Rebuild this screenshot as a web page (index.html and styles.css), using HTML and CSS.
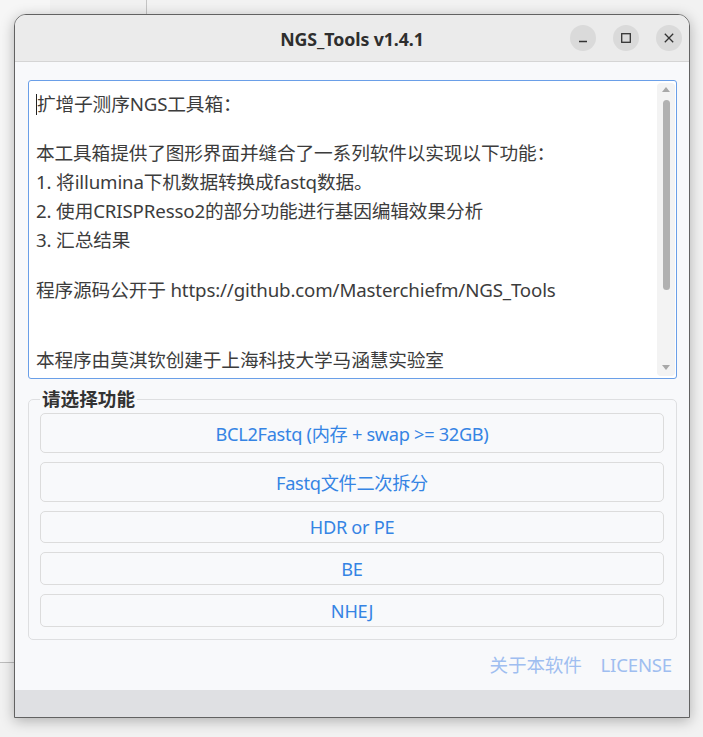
FILE: index.html
```html
<!DOCTYPE html>
<html lang="zh-CN">
<head>
<meta charset="utf-8">
<title>NGS_Tools v1.4.1</title>
<link rel="stylesheet" href="styles.css">
</head>
<body>
<div class="desktop">
  <div class="bg-window bg-top"></div>
  <div class="bg-window bg-left"></div>
  <div class="window">
    <header class="titlebar">
      <div class="title">NGS_Tools v1.4.1</div>
      <div class="controls">
        <span class="ctl"><svg width="12" height="12" viewBox="0 0 12 12"><path d="M2 9.5h8" stroke="#333" stroke-width="1.4" fill="none"/></svg></span>
        <span class="ctl"><svg width="12" height="12" viewBox="0 0 12 12"><rect x="1.7" y="1.7" width="8.6" height="8.6" stroke="#333" stroke-width="1.3" fill="none"/></svg></span>
        <span class="ctl"><svg width="12" height="12" viewBox="0 0 12 12"><path d="M1.8 1.8l8.4 8.4M10.2 1.8l-8.4 8.4" stroke="#333" stroke-width="1.3" fill="none"/></svg></span>
      </div>
    </header>
    <main class="content">
      <div class="textbox">
        <div class="text">
          <p class="line"><span class="caret"></span>扩增子测序NGS工具箱：</p>
          <p class="blank"></p>
          <p class="line">本工具箱提供了图形界面并缝合了一系列软件以实现以下功能：</p>
          <p class="line">1. 将illumina下机数据转换成fastq数据。</p>
          <p class="line">2. 使用CRISPResso2的部分功能进行基因编辑效果分析</p>
          <p class="line">3. 汇总结果</p>
          <p class="blank"></p>
          <p class="line">程序源码公开于 https://github.com/Masterchiefm/NGS_Tools</p>
          <p class="blank"></p>
          <p class="blank"></p>
          <p class="line">本程序由莫淇钦创建于上海科技大学马涵慧实验室</p>
        </div>
        <div class="scrollbar">
          <span class="arrow up"></span>
          <span class="thumb"></span>
          <span class="spacer"></span>
          <span class="arrow down"></span>
        </div>
      </div>
      <fieldset class="group">
        <legend class="group-title">请选择功能</legend>
        <div class="buttons">
          <button class="btn h40">BCL2Fastq (内存 + swap &gt;= 32GB)</button>
          <button class="btn h40">Fastq文件二次拆分</button>
          <button class="btn h32">HDR or PE</button>
          <button class="btn h33">BE</button>
          <button class="btn h33">NHEJ</button>
        </div>
      </fieldset>
      <div class="links">
        <span class="link">关于本软件</span>
        <span class="link">LICENSE</span>
      </div>
    </main>
    <footer class="statusbar"></footer>
  </div>
</div>
</body>
</html>
```
FILE: styles.css
```css
* { box-sizing: border-box; }
html, body { margin: 0; padding: 0; }
body {
  background: #f2f2f2;
  font-family: "Noto Sans", "Noto Sans CJK SC", sans-serif;
  width: 703px;
  height: 737px;
  overflow: hidden;
}
.desktop {
  position: relative;
  width: 703px;
  height: 737px;
}
.bg-window {
  position: absolute;
}
.bg-top {
  left: 44px;
  top: -10px;
  width: 103px;
  height: 50px;
  background: #f1f1f1;
  border-left: 1px solid #c4c4c4;
  border-right: 1px solid #c4c4c4;
}
.bg-left {
  left: -10px;
  top: -10px;
  width: 60px;
  height: 673px;
  background: #f6f6f6;
  border-bottom: 1px solid #bdbdbd;
}
.window {
  position: absolute;
  left: 14px;
  top: 14px;
  width: 676px;
  height: 704px;
  border: 1px solid #626262;
  border-radius: 12px 12px 0 0;
  background: #f8f9fb;
  box-shadow: 0 3px 14px rgba(0, 0, 0, 0.28);
  display: flex;
  flex-direction: column;
  overflow: hidden;
}
.titlebar {
  height: 47px;
  flex: none;
  background: #ebebeb;
  border-bottom: 1px solid #d5d5d5;
  display: grid;
  grid-template-columns: 1fr auto 1fr;
  align-items: center;
}
.title {
  grid-column: 2;
  font-weight: 700;
  font-size: 17.8px;
  letter-spacing: -0.1px;
  color: #2e2e2e;
  padding-top: 1px;
}
.controls {
  grid-column: 3;
  justify-self: end;
  display: flex;
  gap: 17px;
  padding-right: 7px;
}
.ctl {
  width: 26px;
  height: 26px;
  border-radius: 50%;
  background: #dadada;
  display: flex;
  align-items: center;
  justify-content: center;
}
.content {
  flex: 1;
  padding: 18px 12px 0 13px;
  display: flex;
  flex-direction: column;
}
.textbox {
  height: 299px;
  flex: none;
  background: #ffffff;
  border: 1px solid #6a9fe8;
  border-radius: 3px;
  display: flex;
}
.text {
  flex: 1;
  padding: 7.5px 0 0 7px;
  color: #3c3c3c;
  font-size: 18.7px;
  letter-spacing: -0.15px;
}
.text p { margin: 0; white-space: nowrap; }
.line { height: 29px; line-height: 29px; }
.blank { height: 20.5px; }
.caret {
  display: inline-block;
  width: 1px;
  height: 21px;
  background: #222;
  vertical-align: -4px;
}
.scrollbar {
  width: 18px;
  margin: 2px 1px 2px 0;
  background: #f3f3f3;
  border-radius: 4px;
  display: flex;
  flex-direction: column;
  align-items: center;
}
.arrow {
  width: 0;
  height: 0;
  border-left: 4px solid transparent;
  border-right: 4px solid transparent;
}
.arrow.up {
  margin-top: 4px;
  border-bottom: 5px solid #a8a8a8;
}
.arrow.down {
  margin-bottom: 6px;
  border-top: 5px solid #a8a8a8;
}
.thumb {
  width: 7px;
  height: 190px;
  margin-top: 8px;
  border-radius: 4px;
  background: #b1b1b1;
}
.spacer { flex: 1; }
.group {
  margin: 10px 0 0 0;
  padding: 4px 12px 12px 11px;
  border: 1px solid #dedfe1;
  border-radius: 5px;
  min-width: 0;
}
.group-title {
  padding: 0 2px;
  font-weight: 700;
  font-size: 18.6px;
  line-height: 20px;
  color: #333333;
}
.buttons {
  display: flex;
  flex-direction: column;
  gap: 9px;
}
.btn {
  display: block;
  width: 100%;
  border: 1px solid #dcdcdc;
  border-radius: 5px;
  background: #f8f9fb;
  color: #3584e4;
  font-family: "Noto Sans", "Noto Sans CJK SC", sans-serif;
  font-size: 18.2px;
  letter-spacing: -0.3px;
  padding: 0;
}
.h40 { height: 40px; }
.h32 { height: 32px; }
.h33 { height: 33px; }
.links {
  margin-top: 14px;
  padding-right: 5px;
  display: flex;
  justify-content: flex-end;
  gap: 19px;
  font-size: 18.6px;
  letter-spacing: -0.2px;
  line-height: 22px;
  color: #9fbef0;
}
.statusbar {
  height: 27px;
  flex: none;
  background: #dfe0e3;
}
```
